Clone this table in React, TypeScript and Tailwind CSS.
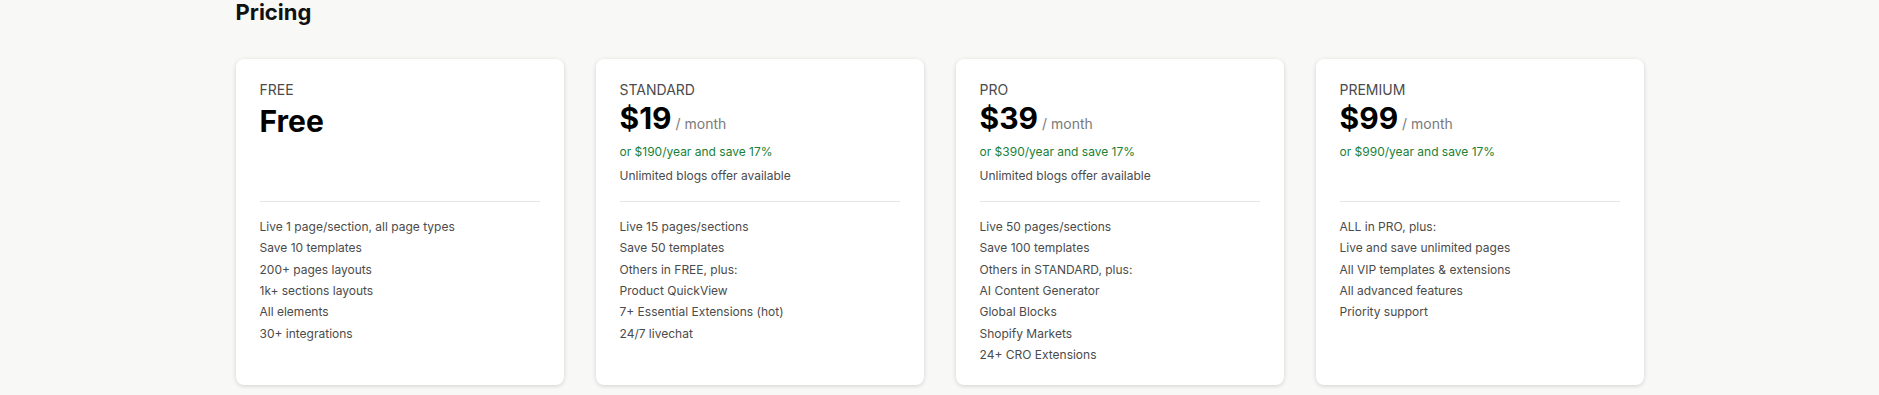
const plans = [
  {
    name: "FREE",
    price: "Free",
    per: false,
    yearly: "",
    extra: "",
    features: [
      "Live 1 page/section, all page types",
      "Save 10 templates",
      "200+ pages layouts",
      "1k+ sections layouts",
      "All elements",
      "30+ integrations",
    ],
  },
  {
    name: "STANDARD",
    price: "$19",
    per: true,
    yearly: "or $190/year and save 17%",
    extra: "Unlimited blogs offer available",
    features: [
      "Live 15 pages/sections",
      "Save 50 templates",
      "Others in FREE, plus:",
      "Product QuickView",
      "7+ Essential Extensions (hot)",
      "24/7 livechat",
    ],
  },
  {
    name: "PRO",
    price: "$39",
    per: true,
    yearly: "or $390/year and save 17%",
    extra: "Unlimited blogs offer available",
    features: [
      "Live 50 pages/sections",
      "Save 100 templates",
      "Others in STANDARD, plus:",
      "AI Content Generator",
      "Global Blocks",
      "Shopify Markets",
      "24+ CRO Extensions",
    ],
  },
  {
    name: "PREMIUM",
    price: "$99",
    per: true,
    yearly: "or $990/year and save 17%",
    extra: "",
    features: [
      "ALL in PRO, plus:",
      "Live and save unlimited pages",
      "All VIP templates & extensions",
      "All advanced features",
      "Priority support",
    ],
  },
];

export default function App() {
  return (
    <div className="min-h-screen bg-[#f8f8f7] font-['Inter','Liberation_Sans',sans-serif]">
      <div className="max-w-[1408px] mx-auto">
        <h1 className="text-[22px] leading-6 font-bold text-[#111]">Pricing</h1>

        {/* Plans */}
        <div className="grid grid-cols-4 gap-8 mt-[35px]">
          {plans.map((plan) => (
            <div
              key={plan.name}
              className="bg-white rounded-lg shadow-[0_1px_4px_rgba(0,0,0,0.16)] px-6 pt-5 pb-5"
            >
              <div className="h-[122px]">
                <div className="text-sm leading-[21px] text-[#4b4b4b]">{plan.name}</div>
                <div
                  className={`h-9 leading-9 whitespace-nowrap ${plan.per ? "mt-0" : "mt-[3px]"}`}
                >
                  <span className="text-3xl leading-9 font-bold text-black">{plan.price}</span>
                  {plan.per && (
                    <span className="ml-1 text-sm leading-none text-[#7a7a7a]">/ month</span>
                  )}
                </div>
                {plan.yearly && (
                  <div className="text-xs leading-5 text-[#1a7f37] mt-1.5">{plan.yearly}</div>
                )}
                {plan.extra && (
                  <div className="text-xs leading-5 text-[#4b4b4b] mt-1">{plan.extra}</div>
                )}
              </div>
              <div className="border-t border-[#e5e5e5]" />
              <ul className="mt-[14px] text-xs leading-[21.33px] text-[#4b4b4b]">
                {plan.features.map((f) => (
                  <li key={f}>{f}</li>
                ))}
              </ul>
            </div>
          ))}
        </div>
      </div>
    </div>
  );
}
